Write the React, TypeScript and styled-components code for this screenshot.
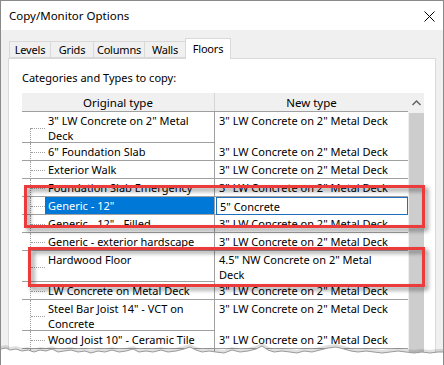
import React from 'react';
import styled, { createGlobalStyle } from 'styled-components';

const GlobalStyle = createGlobalStyle`
  html, body {
    margin: 0;
    padding: 0;
    background: #ffffff;
  }
  body {
    font-family: 'Noto Sans', 'Liberation Sans', sans-serif;
    font-size: 11px;
    color: #000;
  }
`;

type TypeRow = {
  original: string[];
  mapped: string[];
  lines: number;
  selected?: boolean;
};

const LW = '3" LW Concrete on 2" Metal Deck';

const rows: TypeRow[] = [
  { original: ['3" LW Concrete on 2" Metal', 'Deck'], mapped: [LW], lines: 2 },
  { original: ['6" Foundation Slab'], mapped: [LW], lines: 1 },
  { original: ['Exterior Walk'], mapped: [LW], lines: 1 },
  { original: ['Foundation Slab Emergency'], mapped: [LW], lines: 1 },
  { original: ['Generic - 12"'], mapped: ['5" Concrete'], lines: 1, selected: true },
  { original: ['Generic - 12" - Filled'], mapped: [LW], lines: 1 },
  { original: ['Generic - exterior hardscape'], mapped: [LW], lines: 1 },
  { original: ['Hardwood Floor'], mapped: ['4.5" NW Concrete on 2" Metal', 'Deck'], lines: 2 },
  { original: ['LW Concrete on Metal Deck'], mapped: [LW], lines: 1 },
  { original: ['Steel Bar Joist 14" - VCT on', 'Concrete'], mapped: [LW], lines: 2 },
  { original: ['Wood Joist 10" - Ceramic Tile'], mapped: [LW], lines: 1 },
  { original: ['Wood Joist 16" - Vinyl Wash'], mapped: [LW], lines: 1 },
];

const tabs = [
  { label: 'Levels', width: 42 },
  { label: 'Grids', width: 44 },
  { label: 'Columns', width: 52 },
  { label: 'Walls', width: 42 },
  { label: 'Floors', width: 46, active: true },
];

// torn edge of the screenshot, y relative to the svg top
const tearPoints = [
  [0, 9], [5, 8], [9, 10], [15, 9], [21, 11], [27, 10], [33, 12], [39, 10], [45, 11], [51, 9],
  [57, 12], [63, 11], [70, 10], [77, 12], [84, 11], [90, 13], [97, 11], [104, 12], [111, 10],
  [118, 12], [125, 11], [132, 9], [138, 12], [145, 11], [152, 12], [160, 10], [167, 12],
  [175, 11], [183, 9], [189, 7], [195, 10], [201, 12], [208, 11], [215, 12], [223, 13],
  [231, 10], [239, 12], [247, 11], [255, 9], [261, 6], [267, 10], [273, 12], [281, 11],
  [289, 12], [296, 13], [303, 11], [311, 12], [319, 10], [327, 8], [335, 7], [343, 9],
  [350, 11], [357, 12], [365, 11], [373, 12], [381, 13], [389, 12], [397, 11], [405, 12],
  [413, 13], [421, 12], [429, 13], [437, 12], [444, 12],
];

const tearLine = tearPoints.map(([x, y]) => `${x},${y}`).join(' ');

export default function App() {
  return (
    <>
      <GlobalStyle />
      <Dialog>
        <TitleBar>
          <Title>Copy/Monitor Options</Title>
          <CloseButton>
            <svg width="11" height="11" viewBox="0 0 11 11">
              <path d="M0.5 0.5 L10.5 10.5 M10.5 0.5 L0.5 10.5" stroke="#000" strokeWidth="1" />
            </svg>
          </CloseButton>
        </TitleBar>
        <Body>
          <TabStrip>
            {tabs.map(tab => (
              <Tab key={tab.label} $width={tab.width} $active={tab.active}>
                {tab.label}
              </Tab>
            ))}
          </TabStrip>
          <Panel>
            <Caption>Categories and Types to copy:</Caption>
            <Grid>
              <Table>
                <HeaderRow>
                  <HeaderCell>Original type</HeaderCell>
                  <HeaderCell $last>New type</HeaderCell>
                </HeaderRow>
                {rows.map((row, i) => (
                  <Row key={i} $lines={row.lines}>
                    <OrigCell $first={i === 0}>
                      <OrigText $selected={row.selected}>
                        {row.original.map(line => (
                          <Line key={line}>{line}</Line>
                        ))}
                      </OrigText>
                    </OrigCell>
                    <MappedCell $editing={row.selected}>
                      {row.mapped.map(line => (
                        <Line key={line}>{line}</Line>
                      ))}
                    </MappedCell>
                  </Row>
                ))}
              </Table>
              <ScrollBar>
                <ScrollArrow>
                  <svg width="9" height="6" viewBox="0 0 9 6">
                    <path d="M0.5 5 L4.5 1 L8.5 5" fill="none" stroke="#606060" strokeWidth="1.4" />
                  </svg>
                </ScrollArrow>
                <ScrollThumb />
              </ScrollBar>
            </Grid>
          </Panel>
        </Body>
        <Highlight style={{ left: 23, top: 184, width: 401, height: 43 }} />
        <Highlight style={{ left: 27, top: 246, width: 397, height: 40 }} />
        <Tear width="444" height="25" viewBox="0 0 444 25">
          <polygon points={`${tearLine} 444,25 0,25`} fill="#ffffff" />
          <polyline points={tearLine} fill="none" stroke="rgba(0,0,0,0.12)" strokeWidth="3" transform="translate(0,-1.5)" />
          <polyline points={tearLine} fill="none" stroke="#9a9a9a" strokeWidth="1" />
        </Tear>
      </Dialog>
    </>
  );
}

const Dialog = styled.div`
  position: relative;
  width: 444px;
  height: 365px;
  box-sizing: border-box;
  border: 1px solid #8a8a8a;
  border-bottom: none;
  background: #f0f0f0;
  overflow: hidden;
  display: flex;
  flex-direction: column;
`;

const TitleBar = styled.div`
  height: 29px;
  flex: none;
  background: #ffffff;
  display: flex;
  align-items: center;
  justify-content: space-between;
  padding: 0 8px;
`;

const Title = styled.span`
  font-size: 11.5px;
  color: #000;
`;

const CloseButton = styled.div`
  display: flex;
  align-items: center;
  margin-top: 1px;
`;

const Body = styled.div`
  flex: 1;
  display: flex;
  flex-direction: column;
  padding: 0 7px;
`;

const TabStrip = styled.div`
  height: 28px;
  flex: none;
  display: flex;
  align-items: flex-end;
  padding-left: 1px;
`;

const Tab = styled.div<{ $width: number; $active?: boolean }>`
  position: relative;
  box-sizing: border-box;
  width: ${p => p.$width}px;
  height: ${p => (p.$active ? 21 : 17)}px;
  margin-left: -1px;
  margin-bottom: ${p => (p.$active ? -1 : 0)}px;
  z-index: ${p => (p.$active ? 2 : 1)};
  border: 1px solid #d9d9d9;
  border-bottom: ${p => (p.$active ? 'none' : '1px solid #d9d9d9')};
  background: ${p => (p.$active ? '#ffffff' : '#f0f0f0')};
  display: flex;
  justify-content: center;
  align-items: ${p => (p.$active ? 'flex-start' : 'center')};
  padding-top: ${p => (p.$active ? 2 : 0)}px;
  line-height: 16px;
  letter-spacing: -0.2px;

  &:first-child {
    margin-left: 0;
  }
`;

const Panel = styled.div`
  flex: 1;
  background: #ffffff;
  border: 1px solid #d9d9d9;
  border-bottom: none;
  display: flex;
  flex-direction: column;
  padding: 11px 10px 0 13px;
`;

const Caption = styled.div`
  line-height: 16px;
  margin-bottom: 7px;
`;

const Grid = styled.div`
  display: flex;
  width: 402px;
  flex: 1;
`;

const Table = styled.div`
  width: 386px;
  display: flex;
  flex-direction: column;
`;

const HeaderRow = styled.div`
  display: grid;
  grid-template-columns: 193px 193px;
  height: 19px;
  box-sizing: border-box;
  border-bottom: 1px solid #a0a0a0;
  background: #f0f0f0;
`;

const HeaderCell = styled.div<{ $last?: boolean }>`
  display: flex;
  align-items: center;
  justify-content: center;
  border-right: ${p => (p.$last ? 'none' : '1px solid #d5d5d5')};
  font-size: 11.5px;
`;

const Row = styled.div<{ $lines: number }>`
  display: grid;
  grid-template-columns: 193px 193px;
  height: ${p => (p.$lines > 1 ? 31 : 18)}px;
  box-sizing: border-box;
  border-bottom: 1px solid #a0a0a0;
  flex: none;
`;

const OrigCell = styled.div<{ $first?: boolean }>`
  position: relative;
  padding-left: 23px;
  border-right: 1px solid #a0a0a0;

  &::before {
    content: '';
    position: absolute;
    left: 8px;
    top: ${p => (p.$first ? '50%' : '0')};
    bottom: -1px;
    border-left: 1px dotted #a0a0a0;
  }

  &::after {
    content: '';
    position: absolute;
    left: 9px;
    width: 14px;
    top: 50%;
    border-top: 1px dotted #a0a0a0;
  }
`;

const OrigText = styled.div<{ $selected?: boolean }>`
  height: 100%;
  box-sizing: border-box;
  padding: 1px 3px 0;
  background: ${p => (p.$selected ? '#0078d7' : 'transparent')};
  color: ${p => (p.$selected ? '#ffffff' : '#000000')};
`;

const MappedCell = styled.div<{ $editing?: boolean }>`
  box-sizing: border-box;
  padding: 1px 4px 0;
  margin: ${p => (p.$editing ? '0 0 -1px 1px' : '0')};
  padding-left: ${p => (p.$editing ? 3 : 4)}px;
  border: ${p => (p.$editing ? '1px solid #1e6fc0' : 'none')};
  background: #ffffff;
`;

const Line = styled.div`
  line-height: 15px;
  white-space: nowrap;
`;

const ScrollBar = styled.div`
  width: 16px;
  background: #f0f0f0;
  display: flex;
  flex-direction: column;
`;

const ScrollArrow = styled.div`
  height: 20px;
  display: flex;
  align-items: center;
  justify-content: center;
  padding-left: 1px;
`;

const ScrollThumb = styled.div`
  flex: 1;
  margin-left: 1px;
  background: #cdcdcd;
`;

const Highlight = styled.div`
  position: absolute;
  box-sizing: border-box;
  border: 3px solid #ec3b3b;
  filter: drop-shadow(3px 3px 2px rgba(0, 0, 0, 0.45));
  pointer-events: none;
`;

const Tear = styled.svg`
  position: absolute;
  left: 0;
  bottom: 0;
  display: block;
`;
